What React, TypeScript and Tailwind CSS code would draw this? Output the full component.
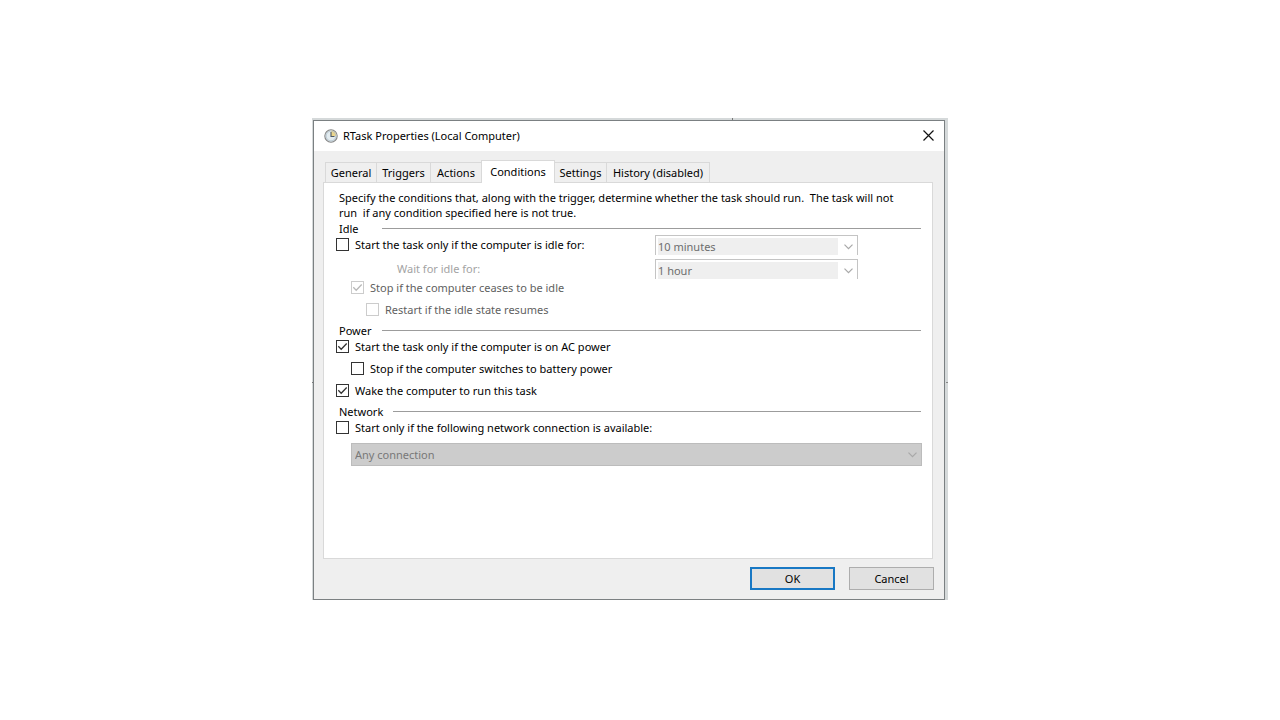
import { useState, type ReactNode } from "react";
import clsx from "clsx";

const tabs = [
  { name: "General", width: "w-[52px]" },
  { name: "Triggers", width: "w-[55px]" },
  { name: "Actions", width: "w-[52px]" },
  { name: "Conditions", width: "w-[74px]" },
  { name: "Settings", width: "w-[53px]" },
  { name: "History (disabled)", width: "w-[104px]" },
];

function ClockIcon() {
  return (
    <svg viewBox="0 0 14 14" className="size-[14px] shrink-0" aria-hidden="true">
      <circle cx="7" cy="7" r="6.2" fill="#e3ecf0" stroke="#858585" strokeWidth="1.1" />
      <path d="M7 7V1.6a5.4 5.4 0 0 1 5.4 5.4z" fill="#ecd68c" />
      <circle cx="7" cy="7" r="4.9" fill="none" stroke="#a9bac6" strokeWidth="0.7" />
      <path d="M7 3v4.5h3.5" fill="none" stroke="#4e5a66" strokeWidth="1.1" />
    </svg>
  );
}

function Chevron({ color }: { color: string }) {
  return (
    <svg viewBox="0 0 9 6" className="h-[6px] w-[9px] shrink-0" aria-hidden="true">
      <path d="M0.5 0.7l4 4 4-4" fill="none" stroke={color} strokeWidth="1.2" />
    </svg>
  );
}

function CheckBox({
  id,
  label,
  checked = false,
  disabled = false,
  className,
}: {
  id: string;
  label: string;
  checked?: boolean;
  disabled?: boolean;
  className?: string;
}) {
  return (
    <div className={clsx("flex items-center gap-[6px]", disabled ? "text-[#5f5f5f]" : "text-black", className)}>
      <span className="grid shrink-0">
        <input
          id={id}
          type="checkbox"
          defaultChecked={checked}
          disabled={disabled}
          className="peer col-start-1 row-start-1 size-[13px] appearance-none border border-[#333333] bg-white disabled:border-[#cccccc]"
        />
        <svg
          viewBox="0 0 13 13"
          className="pointer-events-none col-start-1 row-start-1 hidden size-[13px] text-[#333333] peer-checked:block peer-disabled:text-[#b8b8b8]"
          aria-hidden="true"
        >
          <path d="M2.3 6.3l2.9 2.9 5.5-5.7" fill="none" stroke="currentColor" strokeWidth="1.3" />
        </svg>
      </span>
      <label htmlFor={id}>{label}</label>
    </div>
  );
}

function SectionTitle({ children, className }: { children: ReactNode; className?: string }) {
  return (
    <div className={clsx("flex h-4 items-center pl-[3px]", className)}>
      <h2 className="min-w-[33px]">{children}</h2>
      <span className="ml-[10px] h-px flex-1 bg-[#9c9c9c]" />
    </div>
  );
}

function DurationSelect({ id, label, value }: { id: string; label?: string; value: string }) {
  return (
    <div className="flex h-5 items-center border border-b-0 border-[#c4c4c4] bg-white pt-[2px] pr-1 pl-[2px]">
      <select
        id={id}
        aria-label={label}
        disabled
        defaultValue={value}
        className="mr-[6px] h-full min-w-0 flex-1 appearance-none bg-[#efefef] leading-[16px] text-[#6d6d6d] opacity-100"
      >
        <option>{value}</option>
      </select>
      <Chevron color="#a8a8a8" />
    </div>
  );
}

export default function App() {
  const [activeTab, setActiveTab] = useState("Conditions");

  return (
    <main className="flex min-h-screen items-center justify-center bg-white pr-5 pb-[2px] font-['Noto_Sans','Open_Sans',sans-serif] text-[11px] leading-[15px] text-black">
      <div className="relative w-full max-w-[636px] bg-[#d5d9da] pt-[2px] pr-[3px] pl-px">
        {/* edges of the window behind */}
        <span className="absolute top-0 left-[420px] h-[2px] w-px bg-[#777777]" />
        <span className="absolute top-[264px] left-0 h-px w-px bg-[#777777]" />
        <span className="absolute top-[264px] right-0 h-px w-[2px] bg-[#888888]" />

        <section role="dialog" aria-labelledby="title" className="border border-[#7b8082] bg-[#efefef]">
          <header className="flex h-[30px] items-center bg-white pr-[10px] pb-px pl-[10px]">
            <ClockIcon />
            <h1 id="title" className="ml-[5px] flex-1">
              RTask Properties (Local Computer)
            </h1>
            <button type="button" aria-label="Close">
              <svg viewBox="0 0 11 11" className="size-[11px]" aria-hidden="true">
                <path d="M0.5 0.5l10 10M10.5 0.5l-10 10" stroke="#111111" strokeWidth="1.2" />
              </svg>
            </button>
          </header>

          <div className="pt-[9px] pr-[10px] pb-[9px] pl-[9px]">
            <div role="tablist" className="relative flex items-end pl-[2px]">
              {tabs.map((tab) => (
                <button
                  key={tab.name}
                  type="button"
                  role="tab"
                  aria-selected={activeTab === tab.name}
                  onClick={() => setActiveTab(tab.name)}
                  className={clsx(
                    "-mr-px border border-b-0 border-[#d9d9d9] whitespace-nowrap",
                    tab.width,
                    activeTab === tab.name ? "z-10 -mb-px h-[23px] bg-white pb-[2px]" : "h-5 bg-[#efefef]",
                  )}
                >
                  {tab.name}
                </button>
              ))}
            </div>

            <div role="tabpanel" className="mr-px min-h-[377px] border border-[#d9d9d9] bg-white pt-[7px] pr-[11px] pb-4 pl-3">
              <p className="pr-4 pl-[3px] whitespace-pre-wrap">
                {"Specify the conditions that, along with the trigger, determine whether the task should run.  The task will not run  if any condition specified here is not true."}
              </p>

              <SectionTitle>Idle</SectionTitle>
              <div className="-mt-px flex">
                <div className="w-[319px]">
                  <CheckBox id="idle" label="Start the task only if the computer is idle for:" className="mb-[5px] h-[19px]" />
                  <label htmlFor="wait" className="flex h-[18px] items-center pl-[61px] text-[#a3a3a3]">
                    Wait for idle for:
                  </label>
                  <CheckBox id="cease" label="Stop if the computer ceases to be idle" checked disabled className="ml-[15px] h-[21px]" />
                  <CheckBox id="restart" label="Restart if the idle state resumes" disabled className="ml-[30px] h-[23px]" />
                </div>
                <div className="flex w-[203px] flex-col gap-1">
                  <DurationSelect id="duration" label="Idle duration" value="10 minutes" />
                  <DurationSelect id="wait" value="1 hour" />
                </div>
              </div>

              <SectionTitle className="mt-px">Power</SectionTitle>
              <div className="mt-px space-y-[7px]">
                <CheckBox id="ac" label="Start the task only if the computer is on AC power" checked className="h-[15px]" />
                <CheckBox id="battery" label="Stop if the computer switches to battery power" className="ml-[15px] h-[15px]" />
                <CheckBox id="wake" label="Wake the computer to run this task" checked className="h-[15px]" />
              </div>

              <SectionTitle className="mt-[5px]">Network</SectionTitle>
              <CheckBox id="network" label="Start only if the following network connection is available:" className="mt-px h-[15px]" />
              <div className="mt-2 -mr-px ml-[15px] flex h-[23px] items-center border border-[#bcbcbc] bg-[#cccccc] pr-1 pl-[3px]">
                <select
                  aria-label="Network connection"
                  disabled
                  defaultValue="Any connection"
                  className="h-full min-w-0 flex-1 appearance-none text-[#787878] opacity-100"
                >
                  <option>Any connection</option>
                </select>
                <Chevron color="#a8a8a8" />
              </div>
            </div>

            <footer className="mt-2 flex justify-end gap-[14px]">
              <button type="button" className="h-[23px] w-[85px] border-2 border-[#1878c4] bg-[#e1e1e1]">
                OK
              </button>
              <button type="button" className="h-[23px] w-[85px] border border-[#adadad] bg-[#e1e1e1]">
                Cancel
              </button>
            </footer>
          </div>
        </section>
      </div>
    </main>
  );
}
